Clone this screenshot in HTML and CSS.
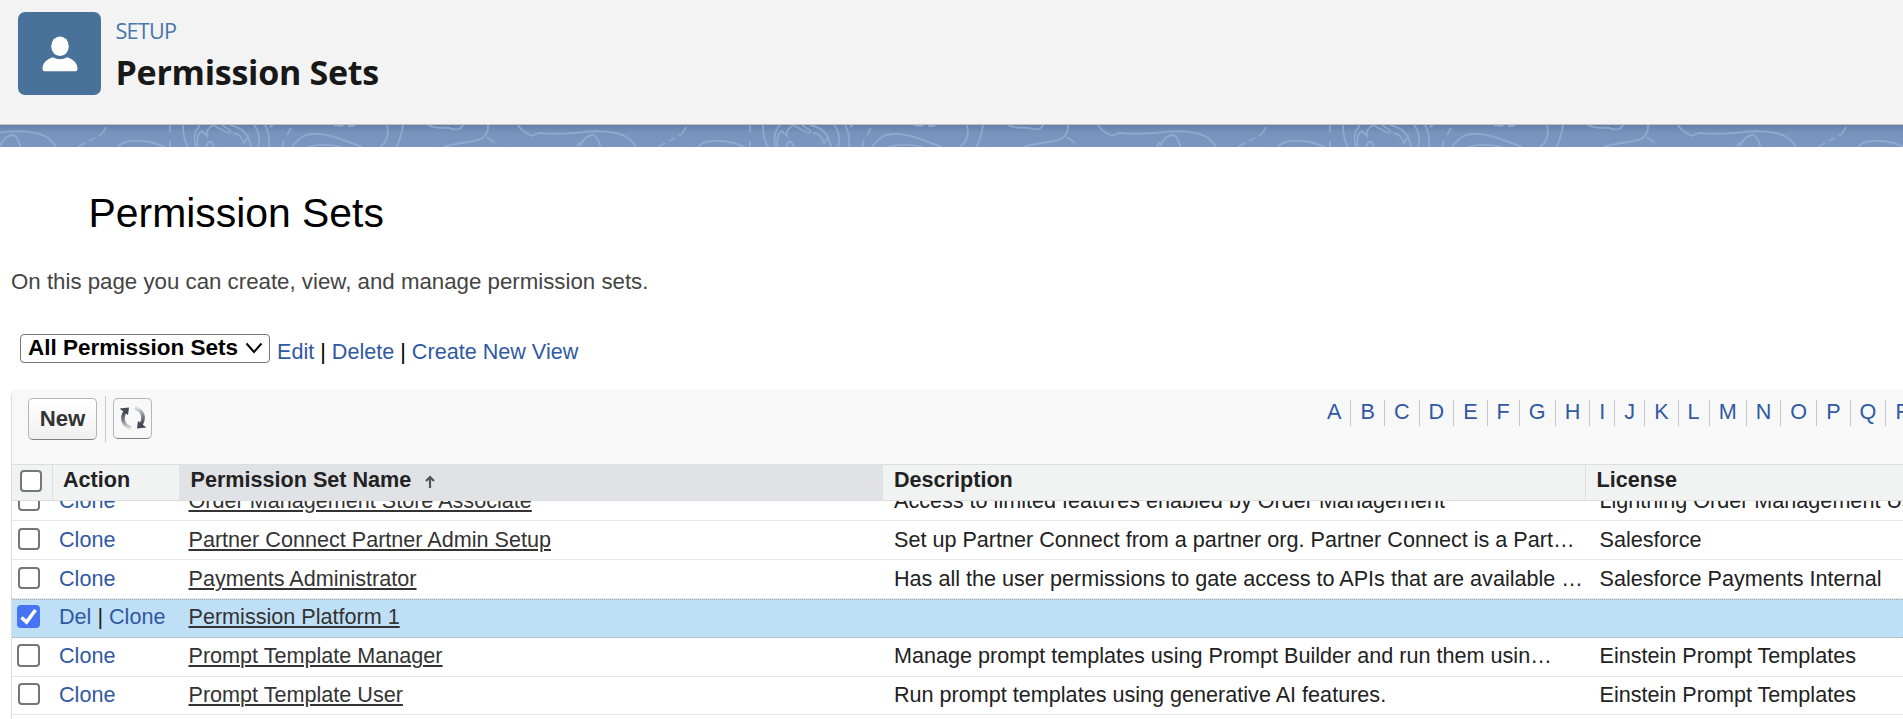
FILE: index.html
```html
<!DOCTYPE html>
<html lang="en">
<head>
<meta charset="utf-8">
<title>Permission Sets</title>
<link rel="stylesheet" href="styles.css">
</head>
<body>
<header class="page-header">
  <div class="header-icon">
    <svg width="36" height="36" viewBox="0 0 36 36"><ellipse cx="18" cy="10.2" rx="8.8" ry="9.8"/><path d="M10.8 21.3C13 22.6 15.500 23.200 18 23.200S23 22.600 25.200 21.300C31 22.800 35.500 27.500 35.500 32.400C35.500 34.300 34.500 35.300 32.500 35.300H3.500C1.500 35.300.5 34.300.5 32.400C.5 27.500 5 22.800 10.800 21.300Z"/></svg>
  </div>
  <div class="header-text">
    <span class="eyebrow">SETUP</span>
    <h1 class="header-title">Permission Sets</h1>
  </div>
</header>
<div class="band">
  <svg class="band-art" width="1903" height="22">
    <defs><pattern id="topo" width="580" height="22" patternUnits="userSpaceOnUse">
      <path d="M0 7.500C12 6 27 6 36 8C46 10 52 15 56 22M0 21C3 15 7 10.500 12 10C17 10 19 16 20.500 22"/>
      <path d="M106 2C104 7 102 9 99 11M95 13L89 16M85 18L78 22"/>
      <path d="M118 22C124 15 132 16 141 16C150 16 156 19 165 22M170 0V7M170 16V22"/>
      <path d="M183 0C183 8 184 16 188 22M200 0C194 7 193 14 196 22M198 22C196 16 198 8 202 6L207 11C206 5 209 3 213 0L226 7C232 9 232 6 228 4L222 0"/>
      <path d="M207 22C207 15 213 15 213 22M230 0C243 3 248 8 251 22M251 22C250 16 249 15 248 12L244 18C242 13 240 9 233 8M258 22C260 14 259 6 254 0M270 2L273 0"/>
      <path d="M265 0C268 5 270 10 269 22M291 3L287 10M284 15L282 22"/>
      <path d="M292 22C300 12 305 9 313 9C329 8 347 17 362 22M308 22C319 19 333 20 342 22M334 0L340 1L344 0M348 1L352 1L356 0"/>
      <path d="M387 0C389 9 387 17 380 22M403 0C402 8 400 14 397 22"/>
      <path d="M428 0C437 5 446 1 452 4C458 5 462 3 463 0M488 0C489 17 473 16 461 18C452 20 448 20 444 22M487 12L495 18M502 22L508 24"/>
      <path d="M518 0C522 7 529 9 532 11L539 8C548 9 563 9 580 7.500M577 22L580 17"/>
    </pattern></defs>
    <rect width="1903" height="22" fill="url(#topo)"/>
  </svg>
</div>
<main class="content">
  <h2 class="page-title">Permission Sets</h2>
  <p class="intro">On this page you can create, view, and manage permission sets.</p>
  <div class="view-bar">
    <div class="view-select">All Permission Sets<svg width="18" height="12" viewBox="0 0 18 12"><path d="M1.500 1.500L9 10L16.500 1.500"/></svg></div>
    <div class="view-links"><a>Edit</a> | <a>Delete</a> | <a>Create New View</a></div>
  </div>
  <section class="list">
    <div class="toolbar">
      <button class="btn btn-new">New</button>
      <span class="divider"></span>
      <button class="btn btn-refresh"><svg width="28" height="28" viewBox="0 0 28 28">
        <defs>
          <linearGradient id="fadeDown" x1="0" y1="0" x2="0" y2="1"><stop offset="0" stop-color="#454955"/><stop offset=".5" stop-color="#777a84"/><stop offset="1" stop-color="#dcdde0"/></linearGradient>
          <linearGradient id="fadeUp" x1="0" y1="1" x2="0" y2="0"><stop offset="0" stop-color="#454955"/><stop offset=".5" stop-color="#777a84"/><stop offset="1" stop-color="#dcdde0"/></linearGradient>
        </defs>
        <path class="arc" stroke="url(#fadeDown)" d="M6.500 7C1.500 14 4 22 12 24"/><path class="arc" stroke="url(#fadeUp)" d="M21.500 21C26.500 14 24 6 16 4"/>
        <path class="tip" d="M.5 4.500L10 3.500L9 11ZM27.500 23.500L18 24.500L19 17Z"/></svg></button>
      <nav class="rolodex"><a>A</a><a>B</a><a>C</a><a>D</a><a>E</a><a>F</a><a>G</a><a>H</a><a>I</a><a>J</a><a>K</a><a>L</a><a>M</a><a>N</a><a>O</a><a>P</a><a>Q</a><a>R</a></nav>
    </div>
    <div class="row head">
      <div class="cell pick"><span class="box"></span></div>
      <div class="cell action">Action</div>
      <div class="cell name">Permission Set Name<svg width="12" height="15" viewBox="0 0 12 15"><path d="M6 14V3M2 7L6 3L10 7"/></svg></div>
      <div class="cell desc">Description</div>
      <div class="cell license">License</div>
    </div>
    <div class="rows">
      <div class="row clipped"><div class="cell pick"><span class="box"></span></div><div class="cell action"><a>Clone</a></div><div class="cell name"><u>Order Management Store Associate</u></div><div class="cell desc">Access to limited features enabled by Order Management</div><div class="cell license">Lightning Order Management User</div></div>
      <div class="row"><div class="cell pick"><span class="box"></span></div><div class="cell action"><a>Clone</a></div><div class="cell name"><u>Partner Connect Partner Admin Setup</u></div><div class="cell desc">Set up Partner Connect from a partner org. Partner Connect is a Part…</div><div class="cell license">Salesforce</div></div>
      <div class="row"><div class="cell pick"><span class="box"></span></div><div class="cell action"><a>Clone</a></div><div class="cell name"><u>Payments Administrator</u></div><div class="cell desc">Has all the user permissions to gate access to APIs that are available …</div><div class="cell license">Salesforce Payments Internal</div></div>
      <div class="row raised selected"><div class="cell pick"><span class="box large checked"><svg width="23" height="23" viewBox="0 0 23 23"><path d="M4.500 12.500L9.500 17L18.500 5"/></svg></span></div><div class="cell action"><a>Del</a> | <a>Clone</a></div><div class="cell name"><u>Permission Platform 1</u></div><div class="cell desc"></div><div class="cell license"></div></div>
      <div class="row raised"><div class="cell pick"><span class="box large"></span></div><div class="cell action"><a>Clone</a></div><div class="cell name"><u>Prompt Template Manager</u></div><div class="cell desc">Manage prompt templates using Prompt Builder and run them usin…</div><div class="cell license">Einstein Prompt Templates</div></div>
      <div class="row raised last"><div class="cell pick"><span class="box"></span></div><div class="cell action"><a>Clone</a></div><div class="cell name"><u>Prompt Template User</u></div><div class="cell desc">Run prompt templates using generative AI features.</div><div class="cell license">Einstein Prompt Templates</div></div>
      <div class="row"></div>
    </div>
  </section>
</main>
</body>
</html>
```
FILE: styles.css
```css
* { box-sizing: border-box; }
body { margin: 0; height: 719px; overflow: hidden; background: #fff; color: #222; font: 21.6px/26px "Liberation Sans", Arial, sans-serif; }
a { color: #3159a3; }
u { color: #333; text-decoration-thickness: 2px; text-underline-offset: 2px; }
svg { display: block; fill: none; }
.page-header { display: flex; height: 125px; padding: 12px 18px; background: #f3f3f3; border-bottom: 1px solid #c4c4c4; }
.header-icon { display: flex; align-items: center; justify-content: center; width: 83px; height: 83px; border-radius: 7px; background: #48729a; }
.header-icon svg { fill: #fff; }
.header-text { display: flex; flex-direction: column; padding: 4px 0 0 14.5px; font-family: "Open Sans", sans-serif; }
.eyebrow { font-size: 21.6px; line-height: 30px; letter-spacing: -0.75px; color: #4a76ab; }
.header-title { margin: 3px 0 0; font-size: 34px; line-height: 46px; letter-spacing: -0.27px; color: #181818; }
.band { height: 22px; background: linear-gradient(#6580a8, #7893bd 8px, #7b96c0); }
.band-art path { stroke: #a2b7d9; stroke-opacity: .6; stroke-width: 1.8; }
.content { padding: 42px 0 0 11px; }
.page-title { margin: 0 0 0 77.5px; font-size: 40.9px; line-height: 48px; font-weight: 400; color: #000; }
.intro { margin: 32px 0 0; font-size: 22.28px; color: #444; }
.view-bar { display: flex; margin: 39px 0 0 9px; height: 55px; }
.view-select { display: flex; align-items: center; justify-content: space-between; width: 250px; height: 29px; padding: 0 6px 1px 7px; border: 1px solid #767676; border-radius: 4px; font-size: 22.5px; font-weight: 700; color: #000; }
.view-select svg path { stroke: #000; stroke-width: 2; }
.view-links { padding: 5px 0 0 7px; color: #000; }
.list { border-left: 1px solid #dcdcdc; border-radius: 7px 0 0 0; overflow: hidden; }
.toolbar { display: flex; height: 75px; padding: 9px 0 0 16px; background: #f8f8f8; white-space: nowrap; }
.btn { display: flex; align-items: center; justify-content: center; flex: none; height: 42px; padding: 0 0 1px; border: 1px solid #b5b5b5; border-bottom-color: #7f7f7f; border-radius: 5px; background: linear-gradient(#fff, #f0f0f0); font: 700 22.2px "Liberation Sans", Arial, sans-serif; color: #333; }
.btn-new { width: 69px; }
.divider { flex: none; width: 1px; height: 46px; margin: -2px 7px 0 8px; background: #c8c8c8; }
.btn-refresh { width: 39px; height: 41px; padding: 0 0 2px; background: #f8f8f8; }
.arc { stroke-width: 3.6; }
.tip { fill: #454955; }
.rolodex { display: flex; margin-left: 1166px; padding-top: 2px; }
.rolodex a { height: 26px; padding: 0 9.03px; border-right: 1px solid #c8c8c8; line-height: 24px; }
.row { display: grid; grid-template-columns: 40px 127px 704px 702px 600px; height: 39px; border-bottom: 1px solid #e6e6e6; white-space: nowrap; }
.cell { padding-top: 6px; }
.pick { padding: 7px 0 0 6px; }
.action { padding-left: 7px; }
.name { padding-left: 9.5px; }
.desc { padding-left: 11px; }
.license { padding-left: 14.5px; }
.head { position: relative; height: 37px; border-top: 1px solid #dedede; border-bottom-color: #dedede; background: #f1f3f2; font-weight: 700; }
.head .cell { padding-top: 2px; border-left: 1px solid #dedede; }
.head .pick { padding: 5px 0 0 8px; border-left: 0; }
.head .action { padding-left: 10px; }
.head .name { display: flex; gap: 13px; padding-left: 10.5px; border-color: #e1e2e6; background: #e1e2e6; }
.head .desc { padding-left: 10px; border-color: #f1f3f2; }
.head .license { padding-left: 10.5px; }
.name svg { margin-top: 7px; }
.name path { stroke: #555; stroke-width: 2.2; }
.box { display: block; width: 22px; height: 22px; border: 2px solid #767676; border-radius: 4px; background: #fff; }
.large { width: 23px; height: 23px; margin-left: -1px; }
.checked { border: 0; background: #4774f5; }
.checked path { stroke: #fff; stroke-width: 3.6; }
.rows { overflow: hidden; }
.clipped { margin-top: -19px; }
.raised .cell { padding-top: 5px; }
.raised .pick { padding-top: 6px; }
.last { height: 38px; }
.selected { background: #bfdff6; border-bottom: 1px dotted #aaa; border-top: 1px dotted #aaa; }
.selected .cell { padding-top: 4px; }
.selected .pick { padding-top: 5px; }
```
